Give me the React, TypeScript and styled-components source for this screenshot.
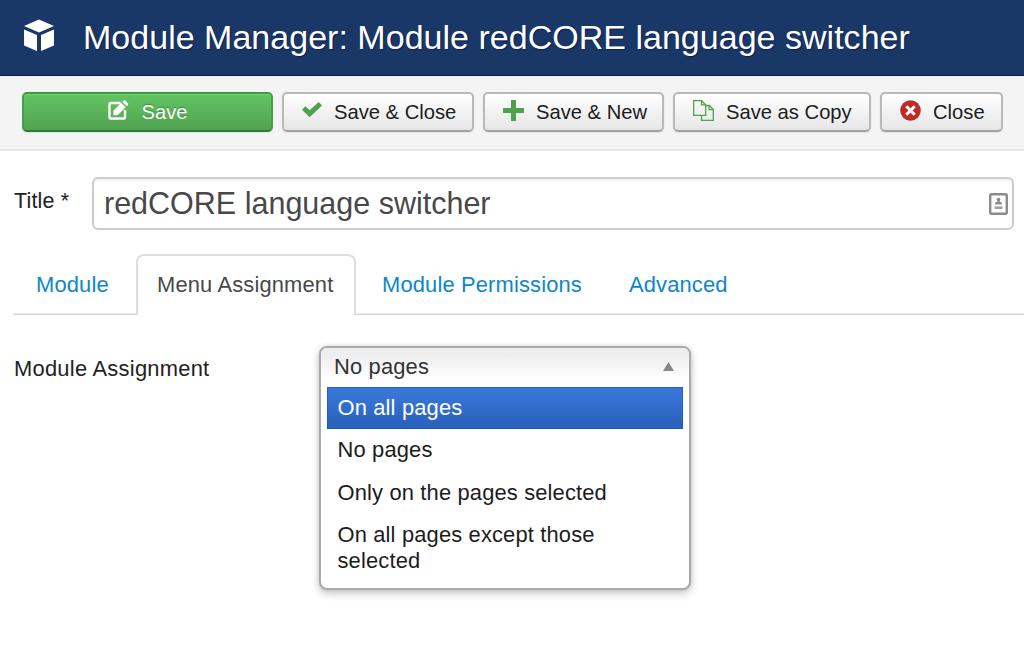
import React from "react";
import styled, { createGlobalStyle, css } from "styled-components";

const GlobalStyle = createGlobalStyle`
  *, *::before, *::after { box-sizing: border-box; }
  body {
    margin: 0;
    background: #fff;
    color: #222;
    font-family: "Liberation Sans", Arial, sans-serif;
    font-size: 21.9px;
    letter-spacing: 0.16px;
    overflow: hidden;
  }
`;

const Page = styled.div`
  height: 656px;
  overflow: hidden;
`;

const Header = styled.header`
  display: flex;
  align-items: center;
  gap: 27px;
  height: 76px;
  padding: 0 0 4px 23px;
  background: #1a3867;
  border-bottom: 1px solid #0d1a55;
  color: #fff;
`;

const PageTitle = styled.h1`
  margin: 0;
  padding-top: 3px;
  font-size: 34px;
  line-height: 40px;
  font-weight: 400;
  letter-spacing: 0.02px;
  white-space: nowrap;
  text-shadow: 1px 1px 1px rgba(0, 0, 60, 0.5);
`;

const Toolbar = styled.div`
  display: flex;
  gap: 9px;
  height: 75px;
  padding: 16px 21px 0 22px;
  background: #f4f4f4;
  border-bottom: 2px solid #e5e5e5;
`;

const ToolButton = styled.button<{ $width: number; $primary?: boolean }>`
  display: flex;
  align-items: center;
  flex: none;
  gap: 12px;
  width: ${(p) => p.$width}px;
  height: 40px;
  padding: 0 0 0 18px;
  border: 2px solid #b9b9b9;
  border-bottom-color: #a2a2a2;
  border-radius: 5px;
  background: linear-gradient(#fff, #e6e6e6);
  box-shadow: 0 1px 2px rgba(0, 0, 0, 0.07);
  color: #1c1c1c;
  font: 400 20.2px/36px "Liberation Sans", Arial, sans-serif;
  letter-spacing: 0;
  white-space: nowrap;

  ${(p) =>
    p.$primary &&
    css`
      justify-content: center;
      padding: 0;
      border-color: #3a9e3e #46a04a #2d7d31;
      background: linear-gradient(#62c462, #51a351);
      box-shadow: inset 0 1px 1px rgba(255, 255, 255, 0.2), 0 1px 2px rgba(0, 0, 0, 0.07);
      color: #fff;
      text-shadow: 0 -1px 1px rgba(0, 0, 0, 0.25);
    `}
`;

const ButtonIcon = styled.svg`
  flex: none;
  position: relative;
  top: -2px;
  overflow: visible;
`;

const TitleRow = styled.div`
  display: flex;
  padding: 26px 10px 0 14px;
`;

const TitleLabel = styled.label`
  width: 78px;
  padding-top: 11px;
  line-height: 26px;
  font-size: 21.5px;
`;

const TitleField = styled.div`
  display: flex;
  align-items: center;
  justify-content: space-between;
  flex: 1;
  height: 53px;
  padding: 0 4px 0 10px;
  border: 2px solid #ccc;
  border-radius: 6px;
  box-shadow: inset 0 2px 2px rgba(0, 0, 0, 0.06);
  color: #484848;
  font-size: 30.5px;
  letter-spacing: 0;
  line-height: 49px;
`;

const Tabs = styled.nav`
  display: flex;
  height: 61px;
  margin: 24px 0 0 13px;
  box-shadow: inset 0 -1.5px #d8d8d8;
`;

const Tab = styled.a<{ $width: number; $inset?: number; $active?: boolean }>`
  width: ${(p) => p.$width}px;
  padding: 2px 0 0 ${(p) => p.$inset ?? 23}px;
  line-height: 57px;
  white-space: nowrap;
  color: #0e86cb;

  ${(p) =>
    p.$active &&
    css`
      padding: 0 0 0 19px;
      border: 2px solid #ddd;
      border-bottom: 0;
      border-radius: 8px 8px 0 0;
      background: #fff;
      color: #484848;
    `}
`;

const FieldRow = styled.div`
  display: flex;
  padding: 31px 0 0 14px;
`;

const FieldLabel = styled.label`
  width: 305px;
  padding-top: 10px;
  line-height: 26px;
  letter-spacing: 0.26px;
`;

const Select = styled.div`
  width: 372px;
  height: 244px;
  border: 2px solid #aaa;
  border-radius: 8px;
  background: #fff;
  box-shadow: 0 4px 8px rgba(0, 0, 0, 0.2), 0 0 5px rgba(0, 0, 0, 0.12);
`;

const SelectedValue = styled.div`
  display: flex;
  align-items: center;
  justify-content: space-between;
  height: 39px;
  padding: 0 15px 2px 13px;
  border-radius: 6px 6px 0 0;
  background: linear-gradient(#eee 20%, #fff 80%);
  color: #333;
`;

const Options = styled.ul`
  margin: 0;
  padding: 0 6px;
  list-style: none;
`;

const Option = styled.li<{ $highlighted?: boolean }>`
  padding: 8px 30px 9px 10.5px;
  line-height: 25.4px;
  color: ${(p) => (p.$highlighted ? "#fff" : "#1c1c1c")};
  background: ${(p) => (p.$highlighted ? "linear-gradient(#3875d7 20%, #2a62bc 90%)" : "none")};
  box-shadow: ${(p) => (p.$highlighted ? "inset 0 0 0 1px rgba(0, 80, 210, 0.5)" : "none")};
`;

export default function App() {
  return (
    <>
      <GlobalStyle />
      <Page>
        <Header>
          <svg width="33" height="34" viewBox="0 0 33 34" fill="#fff">
            <path d="M16 .5 L31 7 L16 13.5 L1 7Z" />
            <path d="M1 10.5 L14 16 V32 L1 26.5Z" />
            <path d="M31 10.5 L18 16 V32 L31 26.5Z" />
          </svg>
          <PageTitle>Module Manager: Module redCORE language switcher</PageTitle>
        </Header>

        <Toolbar>
          <ToolButton $width={251} $primary>
            <ButtonIcon width="22" height="21" viewBox="0 0 21 21">
              <path d="M13 3H3Q2 3 2 4V17.5Q2 18.5 3 18.5H16.5Q17.5 18.5 17.5 17.5V10" fill="none" stroke="#fff" strokeWidth="2.4" />
              <path d="M5.8 15.2V10.8L13.8 2.8L18.2 7.2L10.2 15.2Z" fill="#fff" />
              <path d="M14.8 1.8L16.2 .4Q17 -.2 17.7 .5L20.5 3.3Q21.2 4 20.5 4.8L19.2 6.2Z" fill="#fff" />
            </ButtonIcon>
            Save
          </ToolButton>
          <ToolButton $width={192}>
            <ButtonIcon width="20" height="20" viewBox="0 0 20 20">
              <path d="M0 9.7L3.5 6.2L7.6 10.2L16.7 2L20 5.4L7.6 17.2Z" fill="#4ea14e" />
            </ButtonIcon>
            Save &amp; Close
          </ToolButton>
          <ToolButton $width={181}>
            <ButtonIcon width="21" height="21" viewBox="0 0 21 21">
              <path d="M8 0H13V8H21V13H13V21H8V13H0V8H8Z" fill="#4ea14e" />
            </ButtonIcon>
            Save &amp; New
          </ToolButton>
          <ToolButton $width={198}>
            <ButtonIcon width="21" height="21" viewBox="0 0 21 21" fill="none" stroke="#4ea14e" strokeWidth="1.3">
              <path d="M8.5 15.3V20.3H20.3V9.5L16.3 5.5H12.7" />
              <path d="M.7 .7H8.5L12.7 4.9V15.3H.7Z" />
              <path d="M8.5 .7V4.9H12.7M16 5.5V9.7H20.3" />
            </ButtonIcon>
            Save as Copy
          </ToolButton>
          <ToolButton $width={123}>
            <ButtonIcon width="21" height="21" viewBox="0 0 21 21">
              <circle cx="10.5" cy="10.5" r="10.3" fill="#bd2b26" />
              <path d="M6.3 6.3L14.7 14.7M14.7 6.3L6.3 14.7" stroke="#fff" strokeWidth="3" />
            </ButtonIcon>
            Close
          </ToolButton>
        </Toolbar>

        <TitleRow>
          <TitleLabel>Title *</TitleLabel>
          <TitleField>
            redCORE language switcher
            <svg width="19" height="22" viewBox="0 0 19 22">
              <rect x="1.2" y="1.2" width="16.6" height="19.6" rx="1.5" fill="#fff" stroke="#8b8b8b" strokeWidth="2.4" />
              <circle cx="9.5" cy="6.6" r="1.9" fill="#8b8b8b" />
              <path d="M8.5 7H10.5V8.7L12.8 9.3V11.5H6.2V9.3L8.5 8.7Z" fill="#8b8b8b" />
              <path d="M5.5 14.7H13.5" stroke="#a0a0a0" strokeWidth="2.6" />
            </svg>
          </TitleField>
        </TitleRow>

        <Tabs>
          <Tab $width={123}>Module</Tab>
          <Tab $width={220} $active>Menu Assignment</Tab>
          <Tab $width={250} $inset={26}>Module Permissions</Tab>
          <Tab $width={150}>Advanced</Tab>
        </Tabs>

        <FieldRow>
          <FieldLabel>Module Assignment</FieldLabel>
          <Select>
            <SelectedValue>
              No pages
              <svg width="11" height="9" viewBox="0 0 11 9">
                <path d="M5.5 0L11 9H0Z" fill="#888" />
              </svg>
            </SelectedValue>
            <Options>
              <Option $highlighted>On all pages</Option>
              <Option>No pages</Option>
              <Option>Only on the pages selected</Option>
              <Option>On all pages except those selected</Option>
            </Options>
          </Select>
        </FieldRow>
      </Page>
    </>
  );
}
